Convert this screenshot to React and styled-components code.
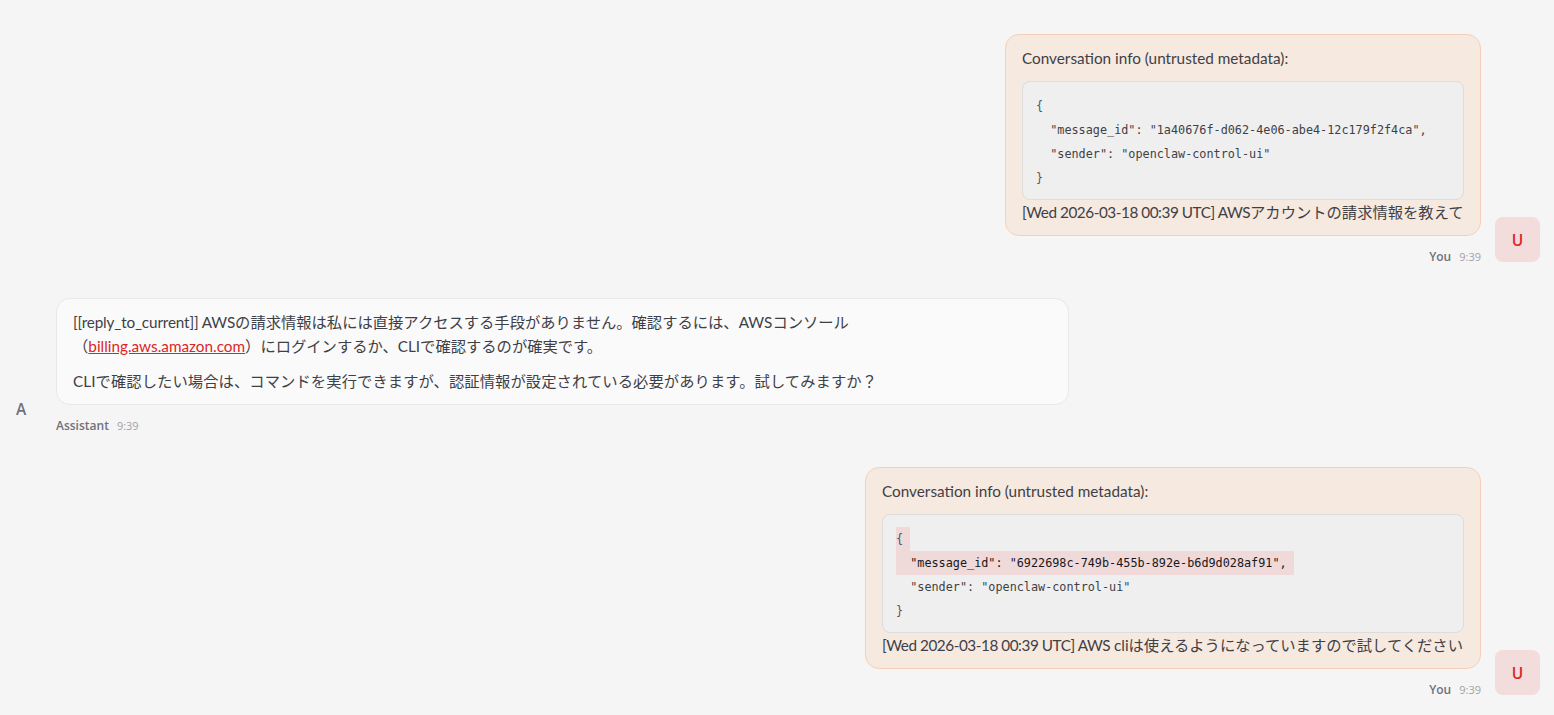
import React from 'react';
import styled, { createGlobalStyle } from 'styled-components';

const GlobalStyle = createGlobalStyle`
html, body {
    margin: 0;
    padding: 0;
    background: #f5f5f5;
    overflow: hidden;
}
`;

const Thread = styled.div`
display: flex;
flex-direction: column;
gap: 33px;
padding: 34px 14px 20px 0;
height: 715px;
box-sizing: border-box;
font-family: "Lato", "Noto Sans CJK JP", sans-serif;
font-size: 15.3px;
line-height: 24px;
color: #3f3f46;
`;

const Group = styled.div`
display: flex;
align-items: flex-end;
gap: 14px;
justify-content: ${(p) => (p.$user ? 'flex-end' : 'flex-start')};
`;

const Avatar = styled.div`
flex: none;
width: ${(p) => (p.$user ? '45px' : '42px')};
height: 45px;
margin-bottom: 3px;
border-radius: 8px;
background: ${(p) => (p.$user ? '#f3dcdc' : 'transparent')};
color: ${(p) => (p.$user ? '#dc2626' : '#71717a')};
display: flex;
align-items: center;
justify-content: center;
font-family: "Open Sans", sans-serif;
font-size: 15.5px;
font-weight: 600;
`;

const Messages = styled.div`
display: flex;
flex-direction: column;
align-items: ${(p) => (p.$user ? 'flex-end' : 'flex-start')};
gap: 12px;
`;

const Bubble = styled.div`
box-sizing: border-box;
width: ${(p) => p.$width}px;
padding: 11px 16px;
border-radius: 14px;
border: 1px solid ${(p) => (p.$user ? '#f5d0b8' : '#e8e8e8')};
background: ${(p) => (p.$user ? '#f6e9df' : '#fafafa')};
`;

const Para = styled.p`
margin: 0 0 11px;
white-space: nowrap;
letter-spacing: ${(p) => p.$spacing || 0}px;

&:last-child {
    margin-bottom: 0;
}
`;

const Tight = styled.span`
letter-spacing: ${(p) => p.$spacing}px;
`;

const TextLink = styled.a`
color: #dc2626;
text-decoration: underline;
`;

const CodeBlock = styled.pre`
margin: 0;
padding: 12px 13px 9px;
border: 1px solid #dcdcdc;
border-radius: 8px;
background: #efefef;
font-family: "DejaVu Sans Mono", monospace;
font-size: 11.8px;
line-height: 24px;
color: #3f3f46;
`;

const CodeLine = styled.div`
height: 24px;
`;

const Brace = styled.span`
color: ${(p) => (p.$close ? '#7a4a4a' : '#3a5a7a')};
`;

const Selected = styled.span`
display: inline-block;
padding-right: 7px;
background: #f0d9d9;
color: #18181b;
`;

const Footer = styled.div`
display: flex;
align-items: baseline;
gap: 8px;
font-family: "Open Sans", sans-serif;
line-height: 17px;
`;

const Sender = styled.span`
font-size: 12px;
font-weight: 600;
color: #71717a;
`;

const Time = styled.span`
font-size: 11px;
color: #a1a1aa;
`;

function Metadata({ id, selected }) {
    const Wrap = selected ? Selected : React.Fragment;
    return (
        <CodeBlock>
            <CodeLine><Wrap><Brace>{'{'}</Brace></Wrap></CodeLine>
            <CodeLine><Wrap>{`  "message_id": "${id}",`}</Wrap></CodeLine>
            <CodeLine>{'  "sender": "openclaw-control-ui"'}</CodeLine>
            <CodeLine><Brace $close>{'}'}</Brace></CodeLine>
        </CodeBlock>
    );
}

function UserMessage({ width, id, selected, text }) {
    return (
        <Group $user>
            <Messages $user>
                <Bubble $user $width={width}>
                    <Para>Conversation info (untrusted metadata):</Para>
                    <Metadata id={id} selected={selected} />
                    <Para>
                        <Tight $spacing={-0.45}>[Wed 2026-03-18 00:39 UTC] AWS</Tight>
                        {text}
                    </Para>
                </Bubble>
                <Footer>
                    <Sender>You</Sender>
                    <Time>9:39</Time>
                </Footer>
            </Messages>
            <Avatar $user>U</Avatar>
        </Group>
    );
}

export default function App() {
    return (
        <>
            <GlobalStyle />
            <Thread>
                <UserMessage
                    width={476}
                    id="1a40676f-d062-4e06-abe4-12c179f2f4ca"
                    text="アカウントの請求情報を教えて"
                />
                <Group>
                    <Avatar>A</Avatar>
                    <Messages>
                        <Bubble $width={1013}>
                            <Para>
                                <Tight $spacing={-0.15}>[[reply_to_current]] AWS</Tight>の請求情報は私には直接アクセスする手段がありません。確認するには、AWSコンソール
                                <br />
                                （<TextLink href="#">billing.aws.amazon.com</TextLink>）にログインするか、CLIで確認するのが確実です。
                            </Para>
                            <Para $spacing={0.08}>CLIで確認したい場合は、コマンドを実行できますが、認証情報が設定されている必要があります。試してみますか？</Para>
                        </Bubble>
                        <Footer>
                            <Sender>Assistant</Sender>
                            <Time>9:39</Time>
                        </Footer>
                    </Messages>
                </Group>
                <UserMessage
                    width={616}
                    id="6922698c-749b-455b-892e-b6d9d028af91"
                    selected
                    text=" cliは使えるようになっていますので試してください"
                />
            </Thread>
        </>
    );
}
